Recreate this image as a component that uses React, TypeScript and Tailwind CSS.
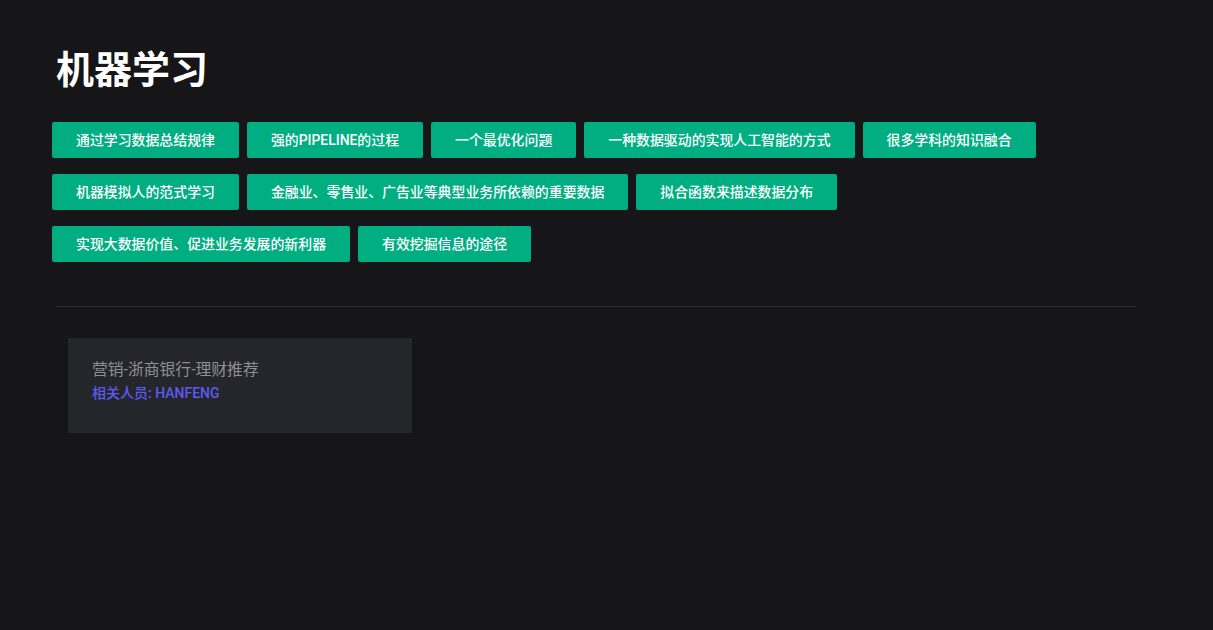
import React from "react";

const tagRows = [
  ["通过学习数据总结规律", "强的PIPELINE的过程", "一个最优化问题", "一种数据驱动的实现人工智能的方式", "很多学科的知识融合"],
  ["机器模拟人的范式学习", "金融业、零售业、广告业等典型业务所依赖的重要数据", "拟合函数来描述数据分布"],
  ["实现大数据价值、促进业务发展的新利器", "有效挖掘信息的途径"],
];

export default function App() {
  return (
    <div
      className="min-h-[630px] w-full bg-[#161618] px-[52px] pt-[50px]"
      style={{ fontFamily: 'Roboto, "Noto Sans CJK SC", sans-serif' }}
    >
      <h1 className="ml-1 h-10 text-[38px] font-bold leading-10 text-white">机器学习</h1>
      <div className="mt-[32px] flex flex-col gap-4">
        {tagRows.map((row, i) => (
          <div key={i} className="flex gap-2">
            {row.map((t) => (
              <div
                key={t}
                className="flex h-9 items-center rounded-[2px] bg-[#00ae82] px-6 text-[13.9px] font-medium text-white"
              >
                {t}
              </div>
            ))}
          </div>
        ))}
      </div>
      <div className="ml-1 mt-[44px] h-px w-[1080px] bg-[#2c2d33]" />
      <div className="ml-4 mt-[31px] h-[95px] w-[344px] bg-[#25262b] px-6 pt-5">
        <div className="text-[15.8px] leading-6 text-[#8e9099]">营销-浙商银行-理财推荐</div>
        <div className="mt-px text-sm font-medium leading-5 text-[#5b5bf2]">相关人员: HANFENG</div>
      </div>
    </div>
  );
}
